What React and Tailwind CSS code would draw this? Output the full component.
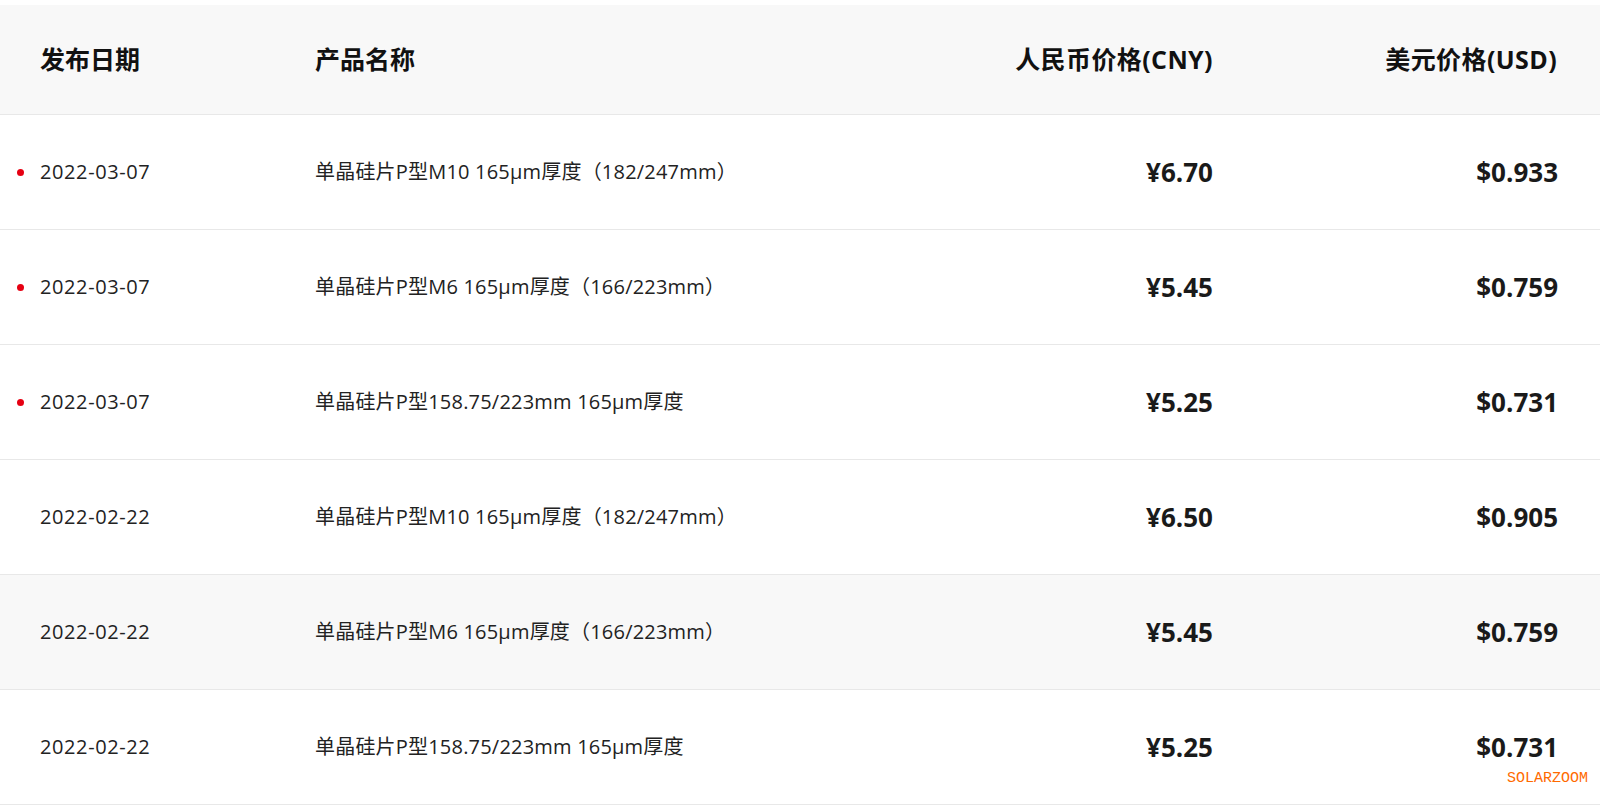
import React from "react";

const rows = [
  { date: "2022-03-07", name: "单晶硅片P型M10 165μm厚度（182/247mm）", cny: "¥6.70", usd: "$0.933", fresh: true },
  { date: "2022-03-07", name: "单晶硅片P型M6 165μm厚度（166/223mm）", cny: "¥5.45", usd: "$0.759", fresh: true },
  { date: "2022-03-07", name: "单晶硅片P型158.75/223mm 165μm厚度", cny: "¥5.25", usd: "$0.731", fresh: true },
  { date: "2022-02-22", name: "单晶硅片P型M10 165μm厚度（182/247mm）", cny: "¥6.50", usd: "$0.905" },
  { date: "2022-02-22", name: "单晶硅片P型M6 165μm厚度（166/223mm）", cny: "¥5.45", usd: "$0.759", hover: true },
  { date: "2022-02-22", name: "单晶硅片P型158.75/223mm 165μm厚度", cny: "¥5.25", usd: "$0.731", mark: true },
];

const font = { fontFamily: '"Open Sans", "Noto Sans CJK SC", sans-serif' };

export default function App() {
  return (
    <div className="w-[1608px] h-[812px] bg-white overflow-hidden" style={font}>
      <div className="w-[1600px] mt-[5px]">
        {/* header */}
        <div className="grid grid-cols-[315px_598px_300px_387px] h-[110px] bg-[#f8f8f8] border-b border-[#e8e8e8] text-[25px] font-bold text-[#111]">
          <div className="pl-[40px] flex items-center">发布日期</div>
          <div className="flex items-center">产品名称</div>
          <div className="flex items-center justify-end tracking-[0.4px]">人民币价格(CNY)</div>
          <div className="flex items-center justify-end pr-[43px] tracking-[0.4px]">美元价格(USD)</div>
        </div>

        {rows.map((r, i) => (
          <div
            key={i}
            className={`relative grid grid-cols-[315px_598px_300px_387px] h-[115px] border-b border-[#e8e8e8] ${r.hover ? "bg-[#f8f8f8]" : "bg-white"}`}
          >
            <div className="pl-[17px] flex items-center text-[20px] text-[#222] tracking-[0.6px]">
              <span className="w-[23px] flex items-center">
                {r.fresh && <span className="w-[7px] h-[7px] rounded-full bg-[#e60012]" />}
              </span>
              {r.date}
            </div>
            <div className="flex items-center text-[20px] text-[#222] whitespace-nowrap tracking-[0.2px]">{r.name}</div>
            <div className="flex items-center justify-end text-[26px] font-bold text-[#1a1a1a]">{r.cny}</div>
            <div className="flex items-center justify-end pr-[42px] text-[26px] font-bold text-[#1a1a1a]">{r.usd}</div>
            {r.mark && (
              <span
                className="absolute right-[12px] top-[81px] text-[15px] leading-none text-[#ff6a00]"
                style={{ fontFamily: '"Liberation Mono", monospace' }}
              >
                SOLARZOOM
              </span>
            )}
          </div>
        ))}
      </div>
    </div>
  );
}
